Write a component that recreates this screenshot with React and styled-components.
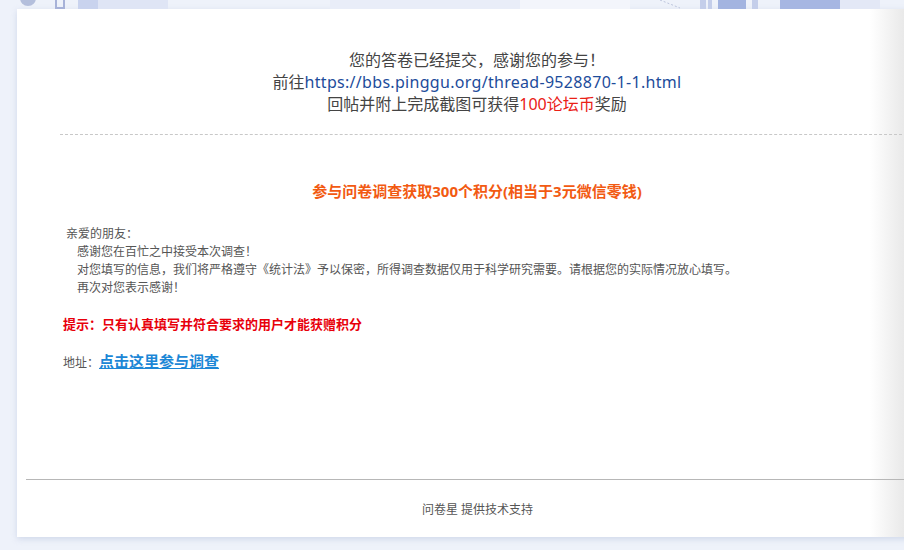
import React from "react";
import styled, { createGlobalStyle } from "styled-components";

const Global = createGlobalStyle`
  html, body {
    margin: 0;
    padding: 0;
    overflow: hidden;
    background: #eef2fa;
  }
  body {
    font-family: "Noto Sans", "Noto Sans CJK SC", sans-serif;
    color: #444;
    text-spacing-trim: space-all;
  }
`;

const Page = styled.div`
  width: 904px;
  height: 550px;
  overflow: hidden;
  background: #eef2fa;
`;

const Banner = styled.div`
  height: 9px;
  overflow: hidden;
  svg {
    display: block;
  }
`;

const Card = styled.div`
  margin-left: 17px;
  width: 920px;
  height: 528px;
  box-sizing: border-box;
  padding-top: 40px;
  display: flex;
  flex-direction: column;
  background: linear-gradient(to right, #fff 853px, #e9e9e9 887px);
  box-shadow: 0 2px 6px rgba(170, 185, 215, 0.45);
`;

const Intro = styled.div`
  text-align: center;
  font-size: 16px;
  line-height: 22px;
  color: #444;
`;

const Url = styled.span`
  color: #1d4c9b;
  letter-spacing: 0.3px;
`;

const Red = styled.span`
  color: #ea2016;
`;

const Dashed = styled.div`
  margin: 19px 0 0 43px;
  border-top: 1px dashed #c8c8c8;
`;

const Title = styled.div`
  margin-top: 45px;
  text-align: center;
  font-size: 15px;
  line-height: 22px;
  font-weight: 700;
  color: #f25a12;
`;

const Letter = styled.div`
  margin: 23px 0 0 49px;
  font-size: 12px;
  line-height: 18px;
  color: #555;
`;

const Line = styled.div`
  padding-left: ${(p) => (p.indent ? "11px" : "0")};
`;

const Tip = styled.div`
  margin: 18px 0 0 46px;
  font-size: 13px;
  line-height: 18px;
  font-weight: 700;
  color: #e8000b;
`;

const Address = styled.div`
  margin: 17px 0 0 46px;
  font-size: 12px;
  line-height: 22px;
  color: #555;
`;

const SurveyLink = styled.a`
  font-size: 15px;
  font-weight: 700;
  color: #1c87d6;
  text-decoration: underline;
  cursor: pointer;
`;

const Footer = styled.div`
  margin: auto 0 0 9px;
  border-top: 1px solid #b7b7b7;
  height: 57px;
  display: flex;
  align-items: center;
  justify-content: center;
  padding-right: 8px;
  font-size: 12px;
  color: #555;
`;

function TopArt() {
  return (
    <svg width="904" height="9" viewBox="0 0 904 9">
      <circle cx="28" cy="-2" r="8" fill="#8e9cc8" opacity="0.6" />
      <rect x="56" y="-4" width="8" height="12" fill="none" stroke="#a7b2d8" strokeWidth="2" />
      <rect x="78" y="0" width="20" height="9" fill="#c9d3ee" />
      <rect x="98" y="0" width="70" height="9" fill="#dfe5f5" />
      <rect x="330" y="0" width="200" height="9" fill="#e9edf8" />
      <rect x="520" y="0" width="110" height="9" fill="#f3f5fb" />
      <path d="M660 0 L680 8" stroke="#bcc4dc" strokeDasharray="2 2" />
      <rect x="700" y="0" width="6" height="9" fill="#c4ceea" />
      <rect x="708" y="0" width="4" height="9" fill="#c4ceea" />
      <rect x="718" y="0" width="28" height="9" fill="#a3b4e0" />
      <rect x="752" y="0" width="6" height="9" fill="#c4ceea" />
      <rect x="780" y="0" width="60" height="9" fill="#a6b6e2" />
      <rect x="840" y="0" width="40" height="9" fill="#e3e8f6" />
    </svg>
  );
}

export default function App() {
  return (
    <Page>
      <Global />
      <Banner>
        <TopArt />
      </Banner>
      <Card>
        <Intro>
          <div>您的答卷已经提交，感谢您的参与！</div>
          <div>
            前往<Url>https://bbs.pinggu.org/thread-9528870-1-1.html</Url>
          </div>
          <div>
            回帖并附上完成截图可获得<Red>100论坛币</Red>奖励
          </div>
        </Intro>
        <Dashed />
        <Title>参与问卷调查获取300个积分(相当于3元微信零钱)</Title>
        <Letter>
          <Line>亲爱的朋友：</Line>
          <Line indent>感谢您在百忙之中接受本次调查！</Line>
          <Line indent>
            对您填写的信息，我们将严格遵守《统计法》予以保密，所得调查数据仅用于科学研究需要。请根据您的实际情况放心填写。
          </Line>
          <Line indent>再次对您表示感谢！</Line>
        </Letter>
        <Tip>提示：只有认真填写并符合要求的用户才能获赠积分</Tip>
        <Address>
          地址：<SurveyLink>点击这里参与调查</SurveyLink>
        </Address>
        <Footer>问卷星 提供技术支持</Footer>
      </Card>
    </Page>
  );
}
